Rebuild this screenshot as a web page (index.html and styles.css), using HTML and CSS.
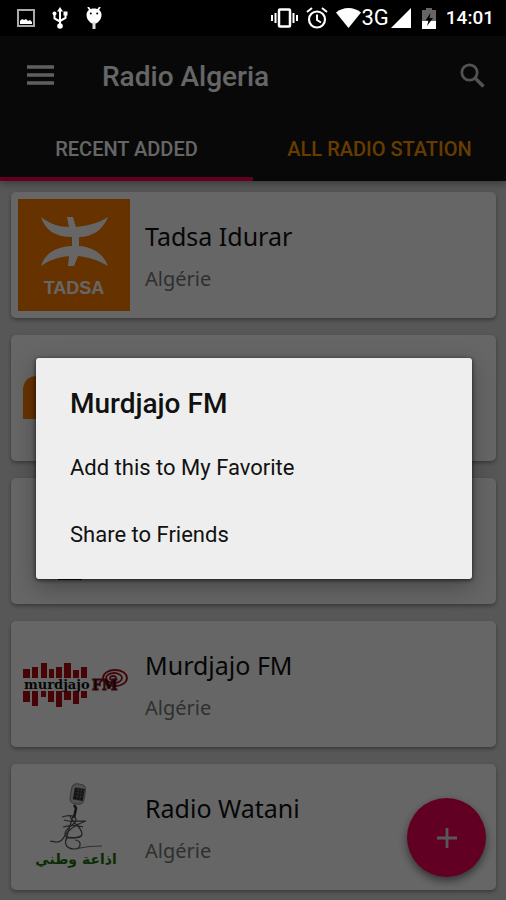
FILE: index.html
```html
<!DOCTYPE html>
<html lang="en">
<head>
    <meta charset="UTF-8">
    <meta name="viewport" content="width=device-width, initial-scale=1.0">
    <title>Radio Algeria</title>
    <link rel="stylesheet" href="styles.css">
</head>
<body>
    <div class="status-bar">
        <div class="status-left">
            <svg width="18" height="18" viewBox="0 0 18 18"><rect x="1" y="1" width="16" height="16" fill="none" stroke="#aaa" stroke-width="2"/><path d="M3 15v-3l2-2 2 1 2-1 2 2 2-1 2 2v2z" fill="#fff"/></svg>
            <svg width="16" height="22" viewBox="0 0 16 22"><path d="M8 19V3M8 14.500l-5.500-3V7M8 14l5.500-3V7" fill="none" stroke="#fff" stroke-width="2"/><path d="M8 0l3 4.500H5z" fill="#fff"/><circle cx="8" cy="19" r="2.800" fill="#fff"/><circle cx="2.500" cy="6.500" r="2" fill="#fff"/><rect x="11.500" y="4.500" width="4" height="4" fill="#fff"/></svg>
            <svg width="18" height="22" viewBox="0 0 18 22"><path d="M3 0l2.500 3.500M15 0l-2.500 3.500" stroke="#fff" stroke-width="1.800"/><path d="M9 1.500c4.500 0 7.500 2.500 7.500 6.500 0 4.500-3.500 7.500-5.500 8.500h-4C5 15.500 1.500 12.500 1.500 8 1.500 4 4.500 1.500 9 1.500z" fill="#fff"/><path d="M9 15v7" stroke="#ddd" stroke-width="3"/><circle cx="5.800" cy="6.500" r="1" fill="#000"/><circle cx="12.200" cy="6.500" r="1" fill="#000"/></svg>
        </div>
        <div class="status-right">
            <svg class="vibrate" width="27" height="20" viewBox="0 0 27 20"><rect x="8" y="1.500" width="11" height="17" rx="1" fill="none" stroke="#fff" stroke-width="2.500"/><path d="M1 7v6M4.500 5v10M22.500 5v10M26 7v6" stroke="#fff" stroke-width="2"/></svg>
            <svg class="alarm" width="22" height="22" viewBox="0 0 22 22"><circle cx="11" cy="12.500" r="8" fill="none" stroke="#fff" stroke-width="2.200"/><path d="M11 7.500v5.500l4 2.500M1 5l5-4M21 5l-5-4" fill="none" stroke="#fff" stroke-width="2"/></svg>
            <svg width="25" height="20" viewBox="0 0 25 20"><path d="M0 4.500C7-1.500 18-1.500 25 4.500L12.500 20z" fill="#fff"/></svg>
            <span class="network">3G</span>
            <svg class="signal" width="20" height="20" viewBox="0 0 20 20"><path d="M20 0v20H0z" fill="#fff"/></svg>
            <svg class="battery" width="14" height="21" viewBox="0 0 14 21"><path d="M4 0h6v2h4v11H0V2h4z" fill="#666"/><path d="M0 13h14v8H0z" fill="#fff"/><path d="M8.500 5L3.500 12.500h3L5 18l6-8H7.500z" fill="#000"/></svg>
            <span class="clock">14:01</span>
        </div>
    </div>

    <div class="app">
        <header class="header">
            <div class="toolbar">
                <button class="icon-btn" type="button" aria-label="Menu">
                    <svg width="27" height="20" viewBox="0 0 27 20"><path d="M0 2h27M0 10h27M0 18h27" stroke="#eee" stroke-width="3.600"/></svg>
                </button>
                <h1 class="title">Radio Algeria</h1>
                <button class="icon-btn" type="button" aria-label="Search">
                    <svg width="25" height="25" viewBox="0 0 25 25"><circle cx="9.500" cy="9.500" r="7.700" fill="none" stroke="#ccc" stroke-width="2.800"/><path d="M15 15l8.500 8.500" stroke="#ccc" stroke-width="3.600"/></svg>
                </button>
            </div>
            <nav class="tabs">
                <a class="tab active" href="#recent">Recent added</a>
                <a class="tab" href="#all">All radio station</a>
            </nav>
        </header>

        <main class="stations" id="recent">
            <article class="card">
                <svg class="thumb" viewBox="0 0 112 112">
                    <rect width="112" height="112" fill="#ff8000"/>
                    <g fill="#fff">
                        <path d="M23 18c9 7 18 10 28 10l-2-10h6l3 10c10-1 21-3 32-10-5 13-16 20-29 20v9c13 1 24 7 29 20-10-6-20-9-30-10l-4 10h-6l1-10c-10 1-20 4-28 10 4-13 15-19 31-20v-9C37 38 27 31 23 18z"/>
                    </g>
                    <text class="tadsa" x="56" y="95">TADSA</text>
                </svg>
                <div class="info">
                    <h2 class="name">Tadsa Idurar</h2>
                    <p class="country">Algérie</p>
                </div>
            </article>
            <article class="card">
                <svg class="thumb" viewBox="0 0 112 112">
                    <path d="M5 77V48c0-8 5-14 14-14h60v43z" fill="#ff8000"/>
                </svg>
            </article>
            <article class="card">
                <svg class="thumb" viewBox="0 0 112 112">
                    <rect x="40" y="60" width="24" height="35" fill="#222"/>
                </svg>
            </article>
            <article class="card">
                <svg class="thumb" viewBox="0 0 112 112">
                    <g fill="#b00c12">
                        <path d="M5 41h7v9H5zM14 39h6v11h-6zM23 35h6v15h-6zM31 41h5v9h-5zM38 39h6v11h-6zM46 35h7v15h-7zM55 42h6v8h-6zM63 39h6v11h-6z"/>
                        <path d="M5 63h7v11H5zM14 63h6v15h-6zM23 63h5v6h-5zM30 63h6v11h-6zM38 63h6v16h-6zM46 63h7v9h-7zM55 63h6v13h-6zM63 63h6v7h-6z"/>
                    </g>
                    <g fill="none" stroke="#a01018" stroke-width="1.800">
                        <ellipse cx="97" cy="50" rx="12" ry="8"/>
                        <ellipse cx="96" cy="50" rx="8" ry="5"/>
                        <ellipse cx="95" cy="50" rx="3" ry="2"/>
                    </g>
                    <text class="murdjajo" x="6" y="61">murdjajo</text>
                    <text class="fm" x="74" y="62">FM</text>
                </svg>
                <div class="info">
                    <h2 class="name">Murdjajo FM</h2>
                    <p class="country">Algérie</p>
                </div>
            </article>
            <article class="card">
                <svg class="thumb" viewBox="0 0 112 112">
                    <g transform="rotate(10 60 22)">
                        <rect x="53" y="13" width="14" height="20" rx="5" fill="#ccc" stroke="#888"/>
                        <path d="M56 17h10v12H56z" fill="#333"/>
                        <path d="M57 19h9M57 22h9M57 25h9M60 16v13M63 16v13" stroke="#777" stroke-width=".6"/>
                    </g>
                    <path d="M56 34l2 3-2 10" fill="none" stroke="#333" stroke-width="2.500"/>
                    <g fill="none" stroke="#555" stroke-width="1.200">
                        <path d="M44 46c8-3 14-1 14 3s-11 8-11 14 13 4 17 1"/>
                        <path d="M46 49c6 2 14 1 22 1-9 3-18 9-22 16s-8 5-14 4"/>
                        <path d="M52 45c3 8 12 11 12 18 0 5-10 4-15 3M45 56c7-2 14-2 20 0M55 45l-7 23"/>
                        <path d="M50 66c-5 5-2 12 6 12s8-9 1-9"/>
                        <path d="M58 78c10-3 18-3 26-3" stroke="#778"/>
                    </g>
                    <text class="watani" x="58" y="93">اذاعة وطني</text>
                </svg>
                <div class="info">
                    <h2 class="name">Radio Watani</h2>
                    <p class="country">Algérie</p>
                </div>
            </article>
        </main>

        <button class="fab" type="button" aria-label="Add">
            <svg width="20" height="20" viewBox="0 0 20 20"><path d="M10 0v20M0 10h20" stroke="#ddd" stroke-width="2.800"/></svg>
        </button>

        <div class="overlay">
            <div class="dialog" role="dialog" aria-labelledby="dialogTitle">
                <h2 class="dialog-title" id="dialogTitle">Murdjajo FM</h2>
                <button class="dialog-item" type="button">Add this to My Favorite</button>
                <button class="dialog-item" type="button">Share to Friends</button>
            </div>
        </div>
    </div>
</body>
</html>
```
FILE: styles.css
```css
* {
    box-sizing: border-box;
}
body {
    margin: 0;
    min-height: 100vh;
    display: flex;
    flex-direction: column;
    font-family: Roboto, sans-serif;
    background-color: #dadada;
}
h1, h2, p {
    margin: 0;
}
button {
    border: none;
    background: none;
    padding: 0;
    font-family: inherit;
    cursor: pointer;
}
svg {
    display: block;
    flex: none;
}

/* status bar */
.status-bar {
    height: 36px;
    padding: 0 12px 0 17px;
    display: flex;
    align-items: center;
    justify-content: space-between;
    background: #000;
    color: #fff;
}
.status-left {
    display: flex;
    align-items: center;
    gap: 17px;
}
.status-right {
    display: flex;
    align-items: center;
}
.vibrate,
.alarm {
    margin-right: 8px;
}
.network {
    font-size: 22px;
    line-height: 36px;
}
.signal {
    margin: 0 11px 0 2px;
}
.clock {
    margin-left: 10px;
    font-size: 19px;
    font-weight: 500;
    line-height: 36px;
}

/* header */
.app {
    position: relative;
    flex: 1;
}
.header {
    position: relative;
    background: #141414;
    box-shadow: 0 2px 8px rgba(0,0,0,0.4);
}
.toolbar {
    height: 80px;
    padding: 0 21px 2px 27px;
    display: flex;
    align-items: center;
}
.title {
    flex: 1;
    margin-left: 48px;
    padding-top: 2px;
    color: #fff;
    font-size: 28px;
    font-weight: 500;
}
.tabs {
    display: grid;
    grid-template-columns: 1fr 1fr;
}
.tab {
    height: 65px;
    border-bottom: 4px solid transparent;
    color: #ff9800;
    font-size: 20px;
    font-weight: 500;
    line-height: 67px;
    text-align: center;
    text-decoration: none;
    text-transform: uppercase;
}
.tab.active {
    color: #fff;
    border-bottom-color: #f50057;
}

/* station list */
.stations {
    padding: 11px 10px 8px 11px;
    display: flex;
    flex-direction: column;
    gap: 17px;
}
.card {
    padding: 7px;
    display: flex;
    gap: 15px;
    background: #fff;
    border-radius: 5px;
    box-shadow: 0 2px 4px rgba(0,0,0,0.35);
}
.thumb {
    width: 112px;
    height: 112px;
}
.info {
    padding-top: 19px;
    font-family: "Noto Sans", sans-serif;
}
.name {
    color: #111;
    font-size: 25px;
    font-weight: 400;
    line-height: 36px;
}
.country {
    margin-top: 10px;
    color: #777;
    font-size: 20px;
    line-height: 30px;
}
.tadsa {
    fill: #fff;
    font-family: "Liberation Sans", sans-serif;
    font-size: 18px;
    font-weight: bold;
    text-anchor: middle;
}
.murdjajo {
    fill: #111;
    font-family: "DejaVu Serif", serif;
    font-size: 13px;
    font-weight: bold;
}
.fm {
    fill: #111;
    stroke: #801018;
    stroke-width: 1px;
    font-family: "DejaVu Serif", serif;
    font-size: 14px;
    font-weight: bold;
}
.watani {
    fill: #20700c;
    font-family: "DejaVu Sans", sans-serif;
    font-size: 14px;
    font-weight: bold;
    text-anchor: middle;
}

.fab {
    position: absolute;
    right: 20px;
    bottom: 23px;
    width: 79px;
    height: 79px;
    display: flex;
    align-items: center;
    justify-content: center;
    background: #f50057;
    border-radius: 50%;
    box-shadow: 0 4px 8px rgba(0,0,0,0.5);
}

/* dialog */
.overlay {
    position: absolute;
    inset: 0;
    padding: 0 34px 0 36px;
    display: flex;
    align-items: center;
    background: rgba(0,0,0,0.6);
}
.dialog {
    flex: 1;
    padding-bottom: 11px;
    background: #eee;
    border-radius: 3px;
    box-shadow: 0 8px 24px rgba(0,0,0,0.3), 0 1px 4px rgba(0,0,0,0.7);
}
.dialog-title {
    padding: 30px 34px 14px;
    color: #111;
    font-size: 28px;
    font-weight: 500;
    line-height: 32px;
}
.dialog-item {
    display: block;
    width: 100%;
    height: 67px;
    padding: 0 34px;
    color: #111;
    font-size: 22px;
    text-align: left;
}
```
